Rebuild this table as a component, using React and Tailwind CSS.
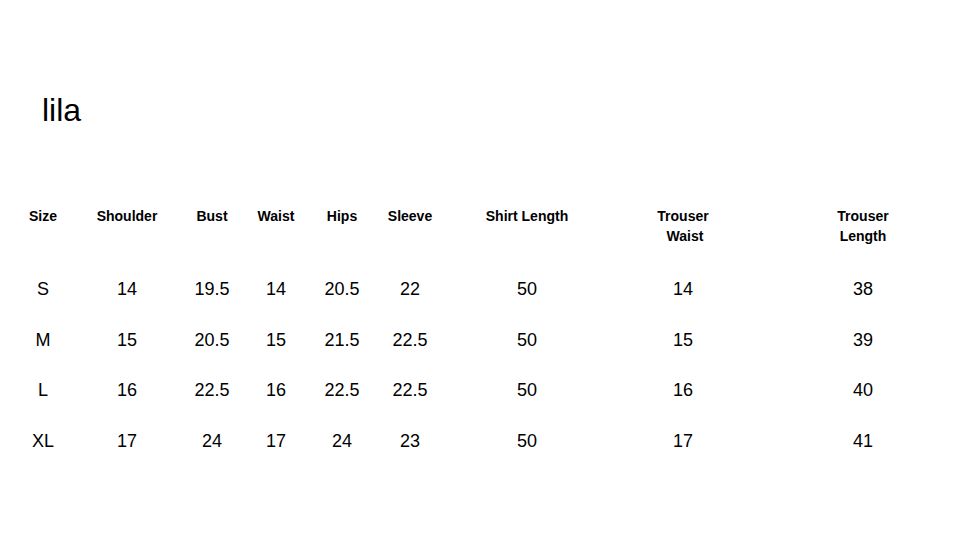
import React from 'react';

const headers = [
    ['Size'],
    ['Shoulder'],
    ['Bust'],
    ['Waist'],
    ['Hips'],
    ['Sleeve'],
    ['Shirt Length'],
    ['Trouser', 'Waist'],
    ['Trouser', 'Length'],
];

const rows = [
    ['S', '14', '19.5', '14', '20.5', '22', '50', '14', '38'],
    ['M', '15', '20.5', '15', '21.5', '22.5', '50', '15', '39'],
    ['L', '16', '22.5', '16', '22.5', '22.5', '50', '16', '40'],
    ['XL', '17', '24', '17', '24', '23', '50', '17', '41'],
];

const gridCols = 'grid grid-cols-[70px_98px_72px_56px_76px_60px_174px_138px_222px]';

const App = () => {
    return (
        <div className="w-[960px] h-[540px] overflow-hidden bg-white text-black font-['Liberation_Sans',Arial,sans-serif]">
            <h1 className="pt-[94px] pl-[42px] text-[32px] leading-none font-normal">lila</h1>

            <div className="mt-[80px] pl-[8px]">
                <div className={`${gridCols} text-[14px] leading-[20px] font-bold`}>
                    {headers.map((lines, i) => (
                        <div key={i} className="text-center">
                            {lines.map((line, j) => (
                                <div key={j} className={j === 1 && i === 7 ? 'pl-[4px]' : ''}>{line}</div>
                            ))}
                        </div>
                    ))}
                </div>

                <div className="mt-[18px]">
                    {rows.map((row, r) => (
                        <div key={r} className={`${gridCols} text-[18px] leading-[50.5px]`}>
                            {row.map((cell, c) => (
                                <div key={c} className="text-center">{cell}</div>
                            ))}
                        </div>
                    ))}
                </div>
            </div>
        </div>
    );
};

export default App;
